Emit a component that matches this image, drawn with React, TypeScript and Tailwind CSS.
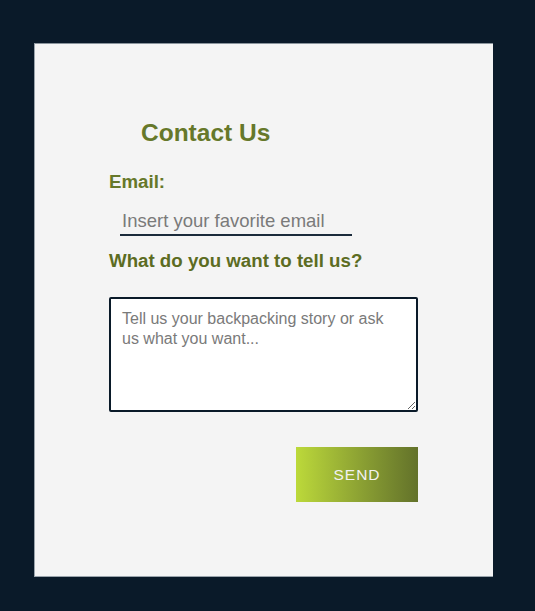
import React from "react";

export default function App() {
  return (
    <div
      className="w-[535px] h-[611px] bg-[#0a1a29] pt-[43px] pl-[34px]"
      style={{ fontFamily: '"Liberation Sans", Arial, sans-serif' }}
    >
      <div className="w-[459px] h-[534px] bg-[#f4f4f4] border-l border-b border-t border-l-[#9aa4ac] border-b-[#9aa4ac] border-t-[#8a949c] pl-[74px] pt-[75px]">
        <div className="w-[309px] flex flex-col">
          <h1 className="pl-[32px] text-[24.5px] leading-[28px] font-bold text-[#66782a]">
            Contact Us
          </h1>
          <label className="mt-[24px] text-[18.7px] leading-[22px] font-bold text-[#66782a]">
            Email:
          </label>
          <input
            type="email"
            placeholder="Insert your favorite email"
            className="mt-[14px] ml-[11px] w-[232px] h-[29px] px-[2px] bg-transparent border-b-2 border-[#1b2b3b] text-[18.5px] leading-[22px] text-[#333] placeholder:text-[#7a7a7a] outline-none"
          />
          <label className="mt-[14px] text-[18.7px] leading-[22px] font-bold text-[#5c6c22]">
            What do you want to tell us?
          </label>
          <textarea
            placeholder="Tell us your backpacking story or ask us what you want..."
            className="mt-[25px] w-[309px] h-[115px] bg-white border-2 border-[#0a1a29] rounded-[2px] pl-[11px] pr-[20px] py-[10px] text-[16px] leading-[19.5px] text-[#333] placeholder:text-[#7a7a7a] outline-none"
          />
          <div className="mt-[35px] flex justify-end">
            <button className="w-[122px] h-[55px] bg-gradient-to-r from-[#bcd93a] to-[#63722a] text-[#f2f2f2] text-[15.5px] tracking-[1px]">
              SEND
            </button>
          </div>
        </div>
      </div>
    </div>
  );
}
